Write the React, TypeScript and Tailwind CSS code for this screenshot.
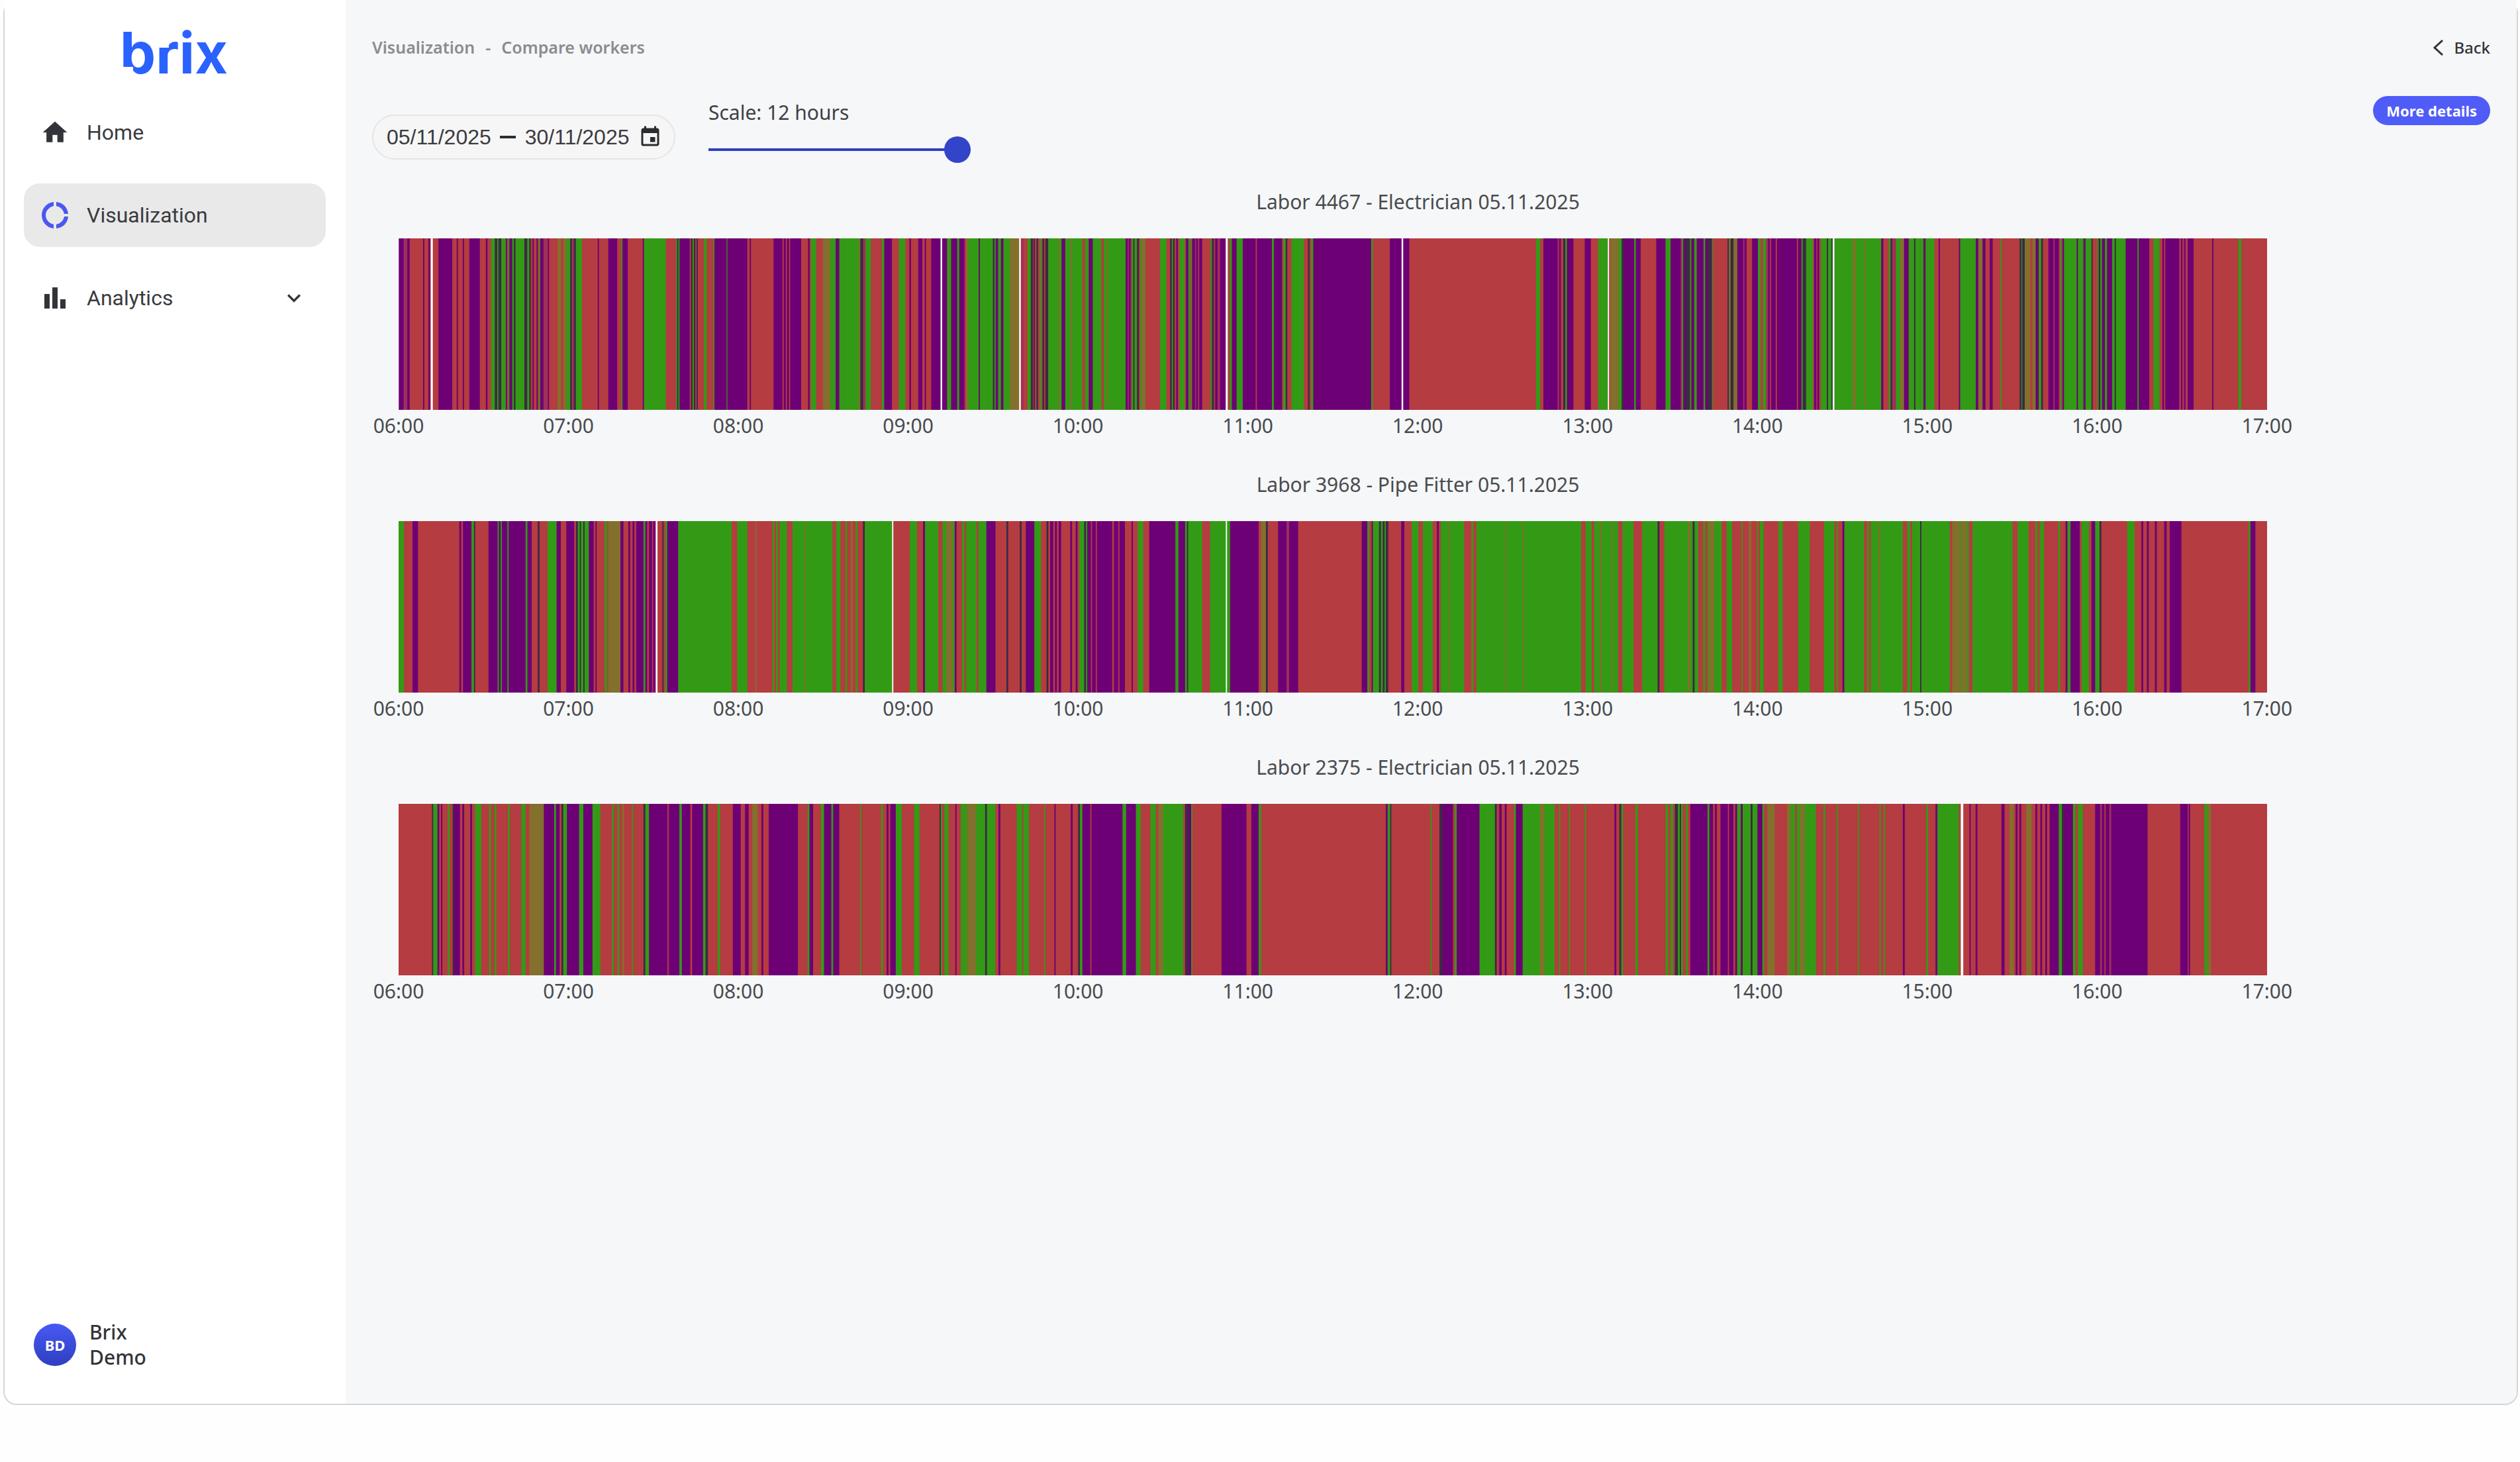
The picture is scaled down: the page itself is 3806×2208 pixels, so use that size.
import { useState } from 'react'
import type { ReactNode } from 'react'
import { MdBarChart, MdDonutLarge, MdExpandMore, MdHome, MdInsertInvitation } from 'react-icons/md'

// ── Timeline data ─────────────────────────────────────────────────────────────
// A day is a list of recordings. Every mark is a state letter plus the tick it
// starts at; a state lasts until the next mark.
type Recording = { x: number; ticks: number; marks: string }
type Worker = { title: string; recordings: Recording[] }

const DAY_WIDTH = 2823

const STATE_COLORS: Record<string, string> = {
  r: '#b53c40',
  g: '#339a16',
  p: '#6d0075',
  m: '#a0305a',
  o: '#82702c',
  d: '#3c2a44',
  w: '#ffffff',
}

const WORKERS: Worker[] = [
  {
    title: 'Labor 4467 - Electrician 05.11.2025',
    recordings: [
      {
        x: -12,
        ticks: 1.6333,
        marks:
          'p20 m32 p41 r47 p80 r83 p93 r97 w99 r104 p118 r152 p163 r166 p178 r181 p194 r220 p235 r239 g248 d257 g263 d266 g273 p284 r287 g290 p293 g300 d304 g308 d330 g337 d342 r346 p350 r353 p360 r363 g366 p369 m377 p388 r391 o412 r420 o426 g434 d443 m447 d452 g457 r472 p511 r514 p537 r559 g569 p572 r585 p622 g625 r679 g704 d707 g710 p713 r738 d741 g745 d748 r752 d755 r758 g773 r780 g796 p799 g829 p831 r880 p886 r889 p945 r967 p970 r975 p978 r983 p986 r1013 p1030 r1034 g1037 r1050 o1067 g1085 p1098 g1107 o1155 d1159 m1166 g1172 r1185 g1212 p1218 r1237 g1254 r1270 p1280 r1284 p1302 r1312 p1318 r1321 p1334 w1357 p1361 g1373 p1383 g1398 p1403 r1416 o1420 g1425 p1451 g1454 d1486 g1490 p1493 g1499 p1506 g1512 o1528 w1551 r1555',
      },
      {
        x: 938,
        ticks: 1.6333,
        marks:
          'm4 r10 g20 d28 m33 d35 r38 d42 r46 g50 r54 d57 r61 d64 g71 o95 g98 p104 g113 o126 g130 r155 g162 p171 g181 r202 g208 o216 g219 p262 m267 p270 m274 g277 d281 g284 d290 r295 g298 o301 r311 g347 r363 d372 g376 d379 r383 p387 r391 g395 r408 p411 g417 r420 g423 p426 m433 p436 m440 p444 r451 g472 d475 r480 p483 m489 p495 w509 r514 g519 p524 g536 p551 r583 p586 g623 p628 r648 g651 d657 r661 g671 r702 d712 r716 g720 p725 g868 r872 p914 w943 p947 r962 g1275 r1285 p1293 m1328 p1332 r1336 d1342 g1347 p1351 r1367 p1395 r1410 g1428 w1452 r1455 o1458 g1479 d1486 p1491 g1517 p1521 r1533',
      },
      {
        x: 1888,
        ticks: 1.568,
        marks:
          'p19 g41 p53 m77 g80 p83 d88 g99 p102 g109 p115 g131 p135 d141 g151 r153 d188 o191 d195 o202 p211 m225 p228 r233 p246 g260 r266 g272 m279 p284 r288 p291 r302 p305 r352 p355 g363 d366 g374 r390 p393 m398 p401 r405 g409 d423 g426 d434 w437 g441 o485 g492 o512 g515 p552 r557 g570 d574 m578 g587 o597 p606 g617 d630 g633 p652 g657 r678 p688 r691 p736 g739 p776 o782 p792 r799 p809 r816 g834 r837 d880 g884 d886 o892 r905 o910 p918 g925 d931 r935 p948 m960 p963 r973 g976 m979 p982 g985 p1015 g1018 p1031 g1036 d1050 r1053 g1064 d1067 g1071 p1075 g1082 p1087 g1099 d1105 g1108 p1131 g1159 p1162 r1187 g1197 r1211 p1218 r1222 p1225 r1258 p1262 m1265 p1270 r1273 p1278 r1292 p1336 r1339 g1398 r1405',
      },
    ],
  },
  {
    title: 'Labor 3968 - Pipe Fitter 05.11.2025',
    recordings: [
      {
        x: -12,
        ticks: 1.0889,
        marks:
          'g13 r22 p36 r45 p113 r116 p119 g133 d137 r139 p161 g176 p178 g181 p183 g192 p194 g222 p225 r232 d242 r245 g258 p273 r280 p289 r302 d305 g308 d311 g313 d317 g319 p326 r334 p337 r339 g352 r356 o358 p378 r383 p391 r394 p398 r401 p404 g416 p419 r422 p425 r430 p432 w436 r439 d447 r449 g452 p455 g473 r561 g570 r587 o600 r602 g628 r631 g634 r637 g640 r652 g661 o681 g683 r727 g733 r740 g748 r751 o757 r760 g765 r768 d777 g780 w825 r827 g854 r866 p876 g879 r901 g908 o914 g925 p928 r931 g940 r944 g947 r964 g967 p980 r995 d1013 r1016 d1035 r1038 p1045 g1059 r1070 d1079 r1082 p1085 r1090 p1093 r1096 p1099 r1103 p1118 r1121 p1127 r1130 g1133 d1141 g1144 p1146 r1152 p1154 r1160 p1162 r1187 p1190 r1197 p1199 r1208 p1219 r1221 g1229 r1238 p1248 g1291 p1296 g1307 d1310 g1312 r1335 g1348 w1374 g1376 p1381 r1428 o1432 d1440 r1443 p1460 m1474 p1478 r1493',
      },
      {
        x: 1418,
        ticks: 1.074,
        marks:
          'p40 g49 r52 p56 g58 d68 g71 d74 g77 d79 r83 p104 r109 g121 r132 g139 r155 p162 r165 g168 o180 g182 r206 g218 r221 g226 o273 g275 o301 g303 r396 g403 r413 g417 o426 g429 o445 g447 r456 g463 r481 g495 d520 r523 g531 o569 g573 d577 g580 r586 g594 r597 g601 o603 g612 r624 g632 r641 g656 r658 o668 r672 g681 r683 g686 r692 g716 r723 g748 r767 g790 r807 g811 r813 p820 g823 r855 g860 r863 g866 o878 g881 r918 g925 r930 g933 d946 g948 r994 o998 g1010 o1012 g1022 r1025 g1031 r1096 g1104 r1122 g1133 r1136 g1140 r1147 g1170 r1173 p1182 g1185 p1190 r1205 g1208 r1220 p1224 g1230 d1237 r1240 g1282 r1294 p1305 r1308 p1314 r1317 p1327 r1330 p1342 r1346 p1351 r1370 g1479 p1482 r1490',
      },
    ],
  },
  {
    title: 'Labor 2375 - Electrician 05.11.2025',
    recordings: [
      {
        x: -12,
        ticks: 1.0889,
        marks:
          'r13 d68 g70 p77 r80 p83 r85 g94 r97 d102 p105 r114 p118 r121 p131 r134 g139 r149 g162 r165 g171 r174 g193 r196 g215 r222 o228 p252 g269 p272 r278 d281 g284 p290 g310 p317 g332 r345 g364 r367 g373 r376 o381 r384 g397 r399 d416 g419 p425 m455 p458 g475 p479 r493 p496 g514 d518 r522 g538 r542 p563 r576 p583 r589 o595 r604 p610 r613 p622 r670 g686 p689 r695 g708 p713 g725 p728 r738 g772 r774 g807 r810 p816 r819 p822 g831 r841 g861 r870 d903 g905 r907 g911 r918 p929 r931 g938 o948 g963 d978 g981 r995 p1000 r1003 g1030 r1039 g1041 r1050 g1075 r1077 p1092 r1094 p1119 r1122 d1131 g1134 p1138 r1151 p1153 g1204 p1210 g1226 r1234 g1250 r1259 o1263 g1271 r1304 d1307 p1312 g1317 r1319 p1367 r1408 p1416 g1428 r1432',
      },
      {
        x: 1418,
        ticks: 1.074,
        marks:
          'p79 g82 d86 r88 g151 r153 d166 p171 r188 g191 p194 g231 d256 r259 p263 r267 p272 r275 g287 p290 g301 o329 g336 r353 g360 r362 g376 r378 g402 r404 p450 r453 d458 g461 r464 g484 r488 g533 r537 g541 r545 d548 g553 d556 g558 r561 g566 r569 p573 g601 p604 r610 p613 r616 p622 r634 p636 r643 p646 g649 p655 g658 d671 g674 p682 g690 r693 o698 r710 o730 g736 r743 g746 o751 g759 r777 g789 r792 g811 r813 g845 r847 g880 r882 g887 r889 p918 r921 g956 r959 p971 g974 r1009 w1012 r1016 p1026 r1028 p1036 r1039 p1078 r1083 o1091 r1098 p1101 r1104 p1107 r1110 o1118 r1127 p1133 r1136 p1141 r1144 p1149 r1152 p1156 g1171 d1176 p1179 g1194 r1198 g1202 r1210 p1230 m1238 p1241 r1245 p1247 m1253 p1256 r1315 p1368 m1380 p1382 r1384 g1407 o1412 r1418',
      },
    ],
  },
]

const HOURS = [
  '06:00',
  '07:00',
  '08:00',
  '09:00',
  '10:00',
  '11:00',
  '12:00',
  '13:00',
  '14:00',
  '15:00',
  '16:00',
  '17:00',
]

function toStripes(recordings: Recording[]) {
  const starts = recordings.flatMap(({ x, ticks, marks }) =>
    marks.split(' ').map((mark) => ({
      state: mark[0],
      from: x + Number(mark.slice(1)) / ticks,
    })),
  )
  // one unit of overlap, so the background never shows between neighbours
  return starts.map((s, i) => ({
    ...s,
    width: (i + 1 < starts.length ? starts[i + 1].from + 1 : DAY_WIDTH) - s.from,
  }))
}

// ── Timeline ──────────────────────────────────────────────────────────────────
function Timeline({ title, recordings }: Worker) {
  return (
    <section>
      <h2 className="pr-10 text-center text-[30px] leading-10 text-[#4a4b4e]">{title}</h2>
      <div className="mt-[35px] pl-10 pr-[337px]">
        <svg
          className="block h-[259px] w-full"
          viewBox={`0 0 ${DAY_WIDTH} 259`}
          preserveAspectRatio="none"
          role="img"
          aria-label={title}
        >
          {toStripes(recordings).map((s, i) => (
            <rect key={i} x={s.from} y={0} width={s.width} height={259} fill={STATE_COLORS[s.state]} />
          ))}
        </svg>
        <div className="mt-0.5 flex justify-between text-[30px] leading-[44px] text-[#4a4b4e]">
          {HOURS.map((hour) => (
            <span key={hour} className="flex w-0 justify-center">
              {hour}
            </span>
          ))}
        </div>
      </div>
    </section>
  )
}

// ── Sidebar ───────────────────────────────────────────────────────────────────
function NavItem({
  icon,
  label,
  active,
  trailing,
}: {
  icon: ReactNode
  label: string
  active?: boolean
  trailing?: ReactNode
}) {
  return (
    <a
      href="#"
      className={`flex h-24 items-center rounded-3xl pl-[23px] pr-7 font-[Roboto,sans-serif] text-[32px] text-[#3a3b3f] ${
        active ? 'bg-[#e9e9e9]' : ''
      }`}
    >
      <span className="mr-6 flex w-12 justify-center text-[#33343a]">{icon}</span>
      <span className="flex-1">{label}</span>
      {trailing}
    </a>
  )
}

function Logo() {
  return (
    <svg className="h-32 w-[180px]" viewBox="0 0 180 128" role="img" aria-label="brix">
      <text x="6" y="103" fill="#2a62ff" fontFamily="Inter, sans-serif" fontWeight="700" fontSize="86">
        brix
      </text>
      {/* notches in the stems of the b and the r */}
      <path d="M6 93h20v13H6z" fill="#fff" />
      <path d="M62 50h18v14H62z" fill="#fff" />
    </svg>
  )
}

function Sidebar() {
  return (
    <aside className="flex w-[515px] shrink-0 flex-col rounded-bl-[20px] bg-white">
      <div className="flex h-[152px] justify-center pt-2">
        <Logo />
      </div>
      <nav className="flex flex-col gap-[29px] pl-[29px] pr-[30px]">
        <NavItem icon={<MdHome className="h-11 w-11" />} label="Home" />
        <NavItem
          icon={<MdDonutLarge className="h-12 w-12 text-[#4a57f0]" />}
          label="Visualization"
          active
        />
        <NavItem
          icon={<MdBarChart className="h-12 w-12" />}
          label="Analytics"
          trailing={<MdExpandMore className="h-10 w-10 text-[#33343a]" />}
        />
      </nav>
      <div className="mt-auto flex items-center gap-5 pb-[51px] pl-11">
        <div className="flex h-16 w-16 items-center justify-center rounded-full bg-linear-to-b from-[#4759f5] to-[#2f3fc0] text-[22px] font-bold text-white">
          BD
        </div>
        <p className="text-[30px] font-medium leading-[38px] text-[#333438]">
          Brix
          <br />
          Demo
        </p>
      </div>
    </aside>
  )
}

// ── App ───────────────────────────────────────────────────────────────────────
export default function App() {
  const [hours, setHours] = useState(12)

  return (
    <div className="min-h-screen bg-[#fefefe] pb-[86px] pl-[5px] pr-[3px] font-['Noto_Sans',sans-serif]">
      <div className="flex min-h-[2122px] rounded-[20px] border-2 border-t-0 border-[#d4d5d8]">
        <Sidebar />
        <main className="min-w-0 flex-1 rounded-br-[20px] bg-[#f5f7f9] px-10 pt-12">
          <header className="flex h-12 items-center justify-between">
            <nav className="flex gap-4 text-[25px] font-semibold text-[#8b8c8f]">
              <a href="#">Visualization</a>
              <span>-</span>
              <span>Compare workers</span>
            </nav>
            <button type="button" className="flex items-center gap-4 text-2xl font-medium text-[#333438]">
              <svg className="h-6 w-4" viewBox="0 0 16 24" fill="none" stroke="currentColor" strokeWidth="3">
                <path d="M15 1 3 12l12 11" />
              </svg>
              Back
            </button>
          </header>

          <div className="mt-[49px] flex items-start">
            <button
              type="button"
              className="mt-7 flex h-[68px] w-[458px] items-center justify-between rounded-full border-2 border-[#e4e5e6] bg-[#f6f6f6] pl-5 pr-[18px] font-['Liberation_Sans',sans-serif] text-[32px] text-[#3a3b3f]"
            >
              <span>05/11/2025</span>
              <span className="h-1 w-6 bg-[#2b2c30]" />
              <span>30/11/2025</span>
              <MdInsertInvitation className="h-9 w-9 text-[#2b2c30]" />
            </button>
            <div className="ml-[50px] w-[396px]">
              <label htmlFor="scale" className="block text-[30px] leading-[50px] text-[#3f4043]">
                Scale: {hours} hours
              </label>
              <input
                id="scale"
                type="range"
                min={1}
                max={12}
                value={hours}
                onChange={(e) => setHours(Number(e.target.value))}
                className="mt-[11px] block h-10 w-full appearance-none bg-linear-to-r from-[#2f3fc0] to-[#2f3fc0] bg-[length:100%_4px] bg-center bg-no-repeat [&::-webkit-slider-thumb]:h-10 [&::-webkit-slider-thumb]:w-10 [&::-webkit-slider-thumb]:appearance-none [&::-webkit-slider-thumb]:rounded-full [&::-webkit-slider-thumb]:bg-[#3244c8]"
              />
            </div>
            <button
              type="button"
              className="ml-auto h-11 rounded-full bg-[#505cf8] px-5 text-[22px] font-bold leading-none text-white"
            >
              More details
            </button>
          </div>

          <div className="mt-[39px] flex flex-col gap-[47px]">
            {WORKERS.map((worker) => (
              <Timeline key={worker.title} {...worker} />
            ))}
          </div>
        </main>
      </div>
    </div>
  )
}
